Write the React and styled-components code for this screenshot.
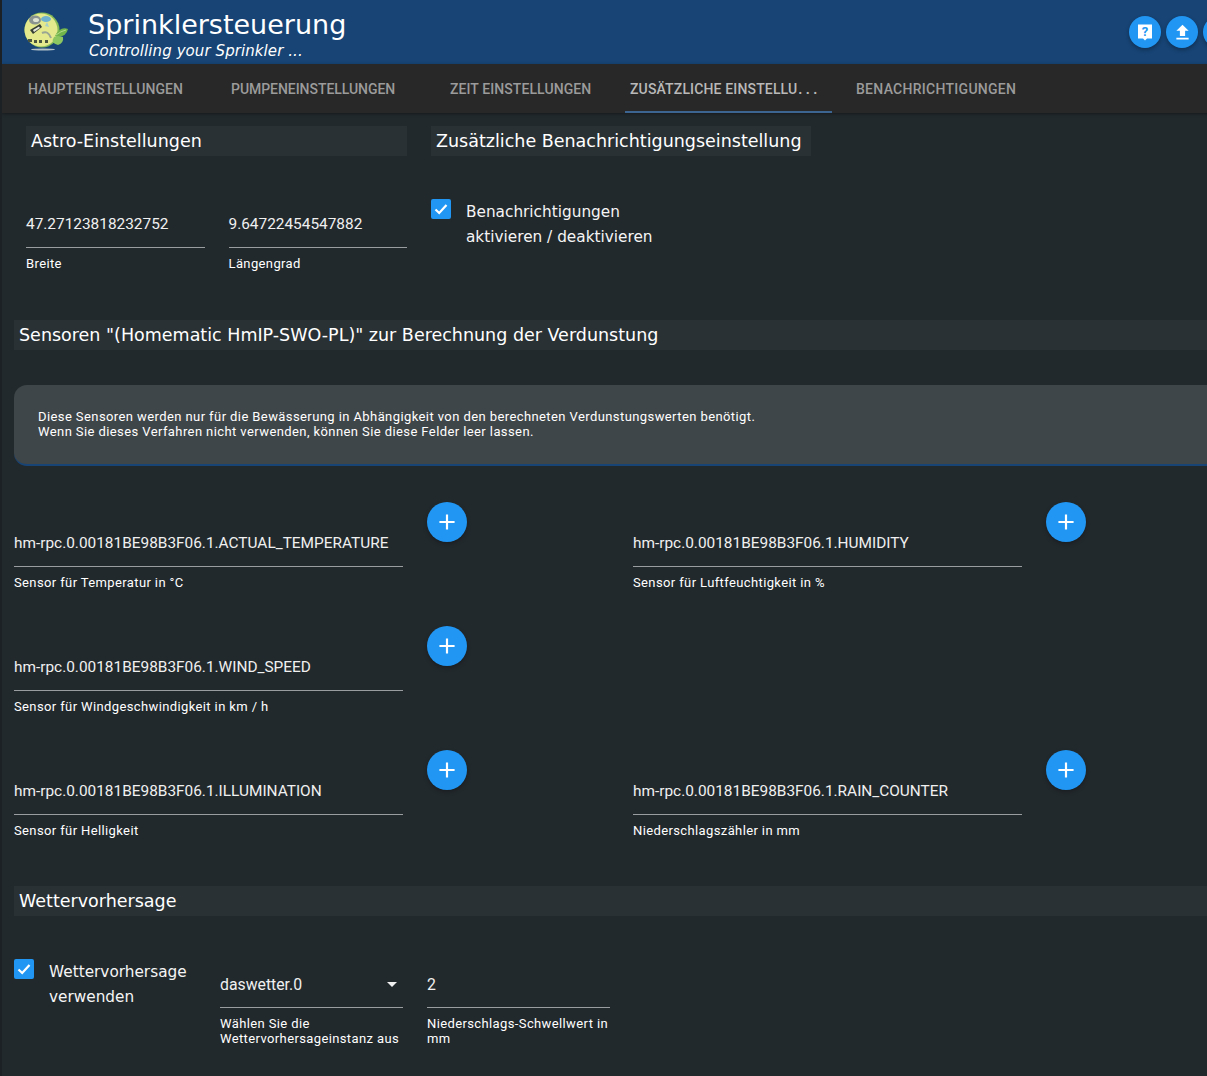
import React from 'react';
import styled, { createGlobalStyle } from 'styled-components';
import { MdFileUpload, MdAdd } from 'react-icons/md';

const GlobalStyle = createGlobalStyle`
  html, body {
    margin: 0;
    padding: 0;
    background: #22292d;
    overflow: hidden;
  }
  * { box-sizing: border-box; }
`;

const sensors = [
  [
    { value: 'hm-rpc.0.00181BE98B3F06.1.ACTUAL_TEMPERATURE', label: 'Sensor für Temperatur in °C' },
    { value: 'hm-rpc.0.00181BE98B3F06.1.HUMIDITY', label: 'Sensor für Luftfeuchtigkeit in %' },
  ],
  [
    { value: 'hm-rpc.0.00181BE98B3F06.1.WIND_SPEED', label: 'Sensor für Windgeschwindigkeit in km / h' },
  ],
  [
    { value: 'hm-rpc.0.00181BE98B3F06.1.ILLUMINATION', label: 'Sensor für Helligkeit' },
    { value: 'hm-rpc.0.00181BE98B3F06.1.RAIN_COUNTER', label: 'Niederschlagszähler in mm' },
  ],
];

const tabs = [
  { name: 'Haupteinstellungen', width: 203, pad: 26, spacing: 0.06 },
  { name: 'Pumpeneinstellungen', width: 212, pad: 26, spacing: -0.05 },
  { name: 'Zeit Einstellungen', width: 208, pad: 33, spacing: 0.08 },
  { name: 'Zusätzliche Einstellu', width: 207, pad: 5, spacing: 0.15, active: true },
  { name: 'Benachrichtigungen', width: 200, pad: 24, spacing: 0.28 },
];

function Logo() {
  return (
    <svg width="50" height="54" viewBox="0 0 50 54">
      <ellipse cx="21" cy="44.5" rx="12" ry="1" fill="#b4c2c8" />
      <circle cx="20" cy="25" r="17.5" fill="#86b957" />
      <circle cx="19" cy="25" r="16.5" fill="#e3e98c" />
      <ellipse cx="13" cy="15" rx="6" ry="4.5" fill="#8b9390" />
      <ellipse cx="14" cy="15" rx="3" ry="2" fill="#dfe3d2" />
      <ellipse cx="24" cy="14" rx="5" ry="3" fill="#6fb2cf" />
      <path d="M25 17 L27 22 L23 21 Z" fill="#a8cfc8" />
      <path d="M8 25 L18 19 L20 22 L11 29 Z" fill="#343c34" />
      <path d="M11 25 L17 21.5 L18 23 L12 27 Z" fill="#e5e8d8" />
      <path d="M20 28 Q26 25 29 33" stroke="#9aa593" strokeWidth="2" fill="none" />
      <path d="M6 34 h4 v3 h-4 z M12 35 h3 v3 h-3 z M17 35 h3 v3 h-3 z M23 35 h3 v3 h-3 z" fill="#4a5540" />
      <path d="M33 31 Q38 21 46 24 Q44 33 33 31 Z" fill="#72b54a" />
      <path d="M32 32 Q28 38 36 40 Q42 38 41 32 Q36 30 32 32 Z" fill="#8cc762" />
      <path d="M34 30 Q39 26 44 25" stroke="#c3e39c" strokeWidth="0.8" fill="none" />
    </svg>
  );
}

function Field({ value, label, wide }) {
  return (
    <FieldBox $wide={wide}>
      <FieldValue>{value}</FieldValue>
      <FieldLine />
      <FieldLabel>{label}</FieldLabel>
    </FieldBox>
  );
}

function Tick() {
  return (
    <svg width="16" height="16" viewBox="0 0 16 16">
      <path d="M2.5 8.5 L6.2 12 L13.5 4" fill="none" stroke="#fff" strokeWidth="2.2" />
    </svg>
  );
}

export default function App() {
  return (
    <Page>
      <GlobalStyle />
      <Header>
        <Logo />
        <Titles>
          <Title>Sprinklersteuerung</Title>
          <Subtitle>Controlling your Sprinkler ...</Subtitle>
        </Titles>
        <HeaderButtons>
          <RoundButton>
            <svg width="18" height="18" viewBox="0 0 18 18">
              <path d="M2 1.5h14v14h-5l-2 2-2-2H2z" fill="#fff" />
              <text x="9" y="13" fontFamily="Roboto, sans-serif" fontSize="13" fontWeight="700" textAnchor="middle" fill="#2196f3">?</text>
            </svg>
          </RoundButton>
          <RoundButton><MdFileUpload size={21} /></RoundButton>
          <RoundButton><MdFileUpload size={21} /></RoundButton>
        </HeaderButtons>
      </Header>

      <TabBar>
        {tabs.map((t) => (
          <Tab key={t.name} $width={t.width} $pad={t.pad} $spacing={t.spacing} $active={t.active}>
            {t.name}
            {t.active && <TabDots>...</TabDots>}
          </Tab>
        ))}
      </TabBar>

      <Content>
        <TopRow>
          <AstroColumn>
            <SectionTitle>Astro-Einstellungen</SectionTitle>
            <AstroFields>
              <Field value="47.27123818232752" label="Breite" />
              <Field value="9.64722454547882" label="Längengrad" />
            </AstroFields>
          </AstroColumn>
          <NoticeColumn>
            <SectionTitle>Zusätzliche Benachrichtigungseinstellung</SectionTitle>
            <CheckRow>
              <CheckBox><Tick /></CheckBox>
              <CheckText>Benachrichtigungen<br />aktivieren / deaktivieren</CheckText>
            </CheckRow>
          </NoticeColumn>
        </TopRow>

        <SectionTitle>Sensoren "(Homematic HmIP-SWO-PL)" zur Berechnung der Verdunstung</SectionTitle>

        <InfoBox>
          Diese Sensoren werden nur für die Bewässerung in Abhängigkeit von den berechneten Verdunstungswerten benötigt.<br />
          Wenn Sie dieses Verfahren nicht verwenden, können Sie diese Felder leer lassen.
        </InfoBox>

        <SensorGrid>
          {sensors.map((row) => (
            <SensorRow key={row[0].value}>
              {row.map((s) => (
                <SensorCell key={s.value}>
                  <Field value={s.value} label={s.label} wide />
                  <AddButton><MdAdd size={26} /></AddButton>
                </SensorCell>
              ))}
            </SensorRow>
          ))}
        </SensorGrid>

        <WeatherTitle>Wettervorhersage</WeatherTitle>

        <WeatherRow>
          <WeatherCheck>
            <CheckBox><Tick /></CheckBox>
            <CheckText>Wettervorhersage<br />verwenden</CheckText>
          </WeatherCheck>
          <SmallField>
            <SelectValue>
              daswetter.0
              <Caret />
            </SelectValue>
            <FieldLine />
            <FieldLabel>Wählen Sie die<br />Wettervorhersageinstanz aus</FieldLabel>
          </SmallField>
          <SmallField>
            <SelectValue>2</SelectValue>
            <FieldLine />
            <FieldLabel>Niederschlags-Schwellwert in<br />mm</FieldLabel>
          </SmallField>
        </WeatherRow>
      </Content>
    </Page>
  );
}

const Page = styled.div`
  width: 1300px;
  height: 1076px;
  border-left: 2px solid #1b2125;
  background: #22292d;
  overflow: hidden;
  font-family: Roboto, sans-serif;
  color: #fff;
`;

const Header = styled.header`
  height: 64px;
  background: #174475;
  display: flex;
  align-items: center;
  padding-left: 20px;
`;

const Titles = styled.div`
  margin-left: 16px;
  margin-top: 4px;
`;

const Title = styled.div`
  font-family: "DejaVu Sans", sans-serif;
  font-size: 27px;
  line-height: 34px;
  color: #fff;
`;

const Subtitle = styled.div`
  font-family: "DejaVu Sans", sans-serif;
  font-style: italic;
  font-size: 15px;
  line-height: 18px;
  letter-spacing: 0.08px;
  margin-left: 1px;
  color: #fff;
`;

const HeaderButtons = styled.div`
  position: absolute;
  left: 1129px;
  top: 16px;
  display: flex;
  gap: 5px;
`;

const RoundButton = styled.button`
  width: 32px;
  height: 32px;
  border-radius: 50%;
  border: 0;
  padding: 0;
  background: #2196f3;
  color: #fff;
  display: flex;
  align-items: center;
  justify-content: center;
  box-shadow: 0 2px 4px rgba(0, 0, 0, 0.3);
`;

const TabBar = styled.nav`
  height: 49px;
  background: #282828;
  display: flex;
  box-shadow: 0 1px 3px rgba(0, 0, 0, 0.4);
`;

const Tab = styled.div`
  width: ${(p) => p.$width}px;
  padding-left: ${(p) => p.$pad}px;
  padding-top: 2px;
  display: flex;
  align-items: center;
  font-size: 14px;
  font-weight: 500;
  letter-spacing: ${(p) => p.$spacing}px;
  text-transform: uppercase;
  white-space: nowrap;
  color: ${(p) => (p.$active ? '#b9b9b9' : '#9b9b9b')};
  border-bottom: 2px solid ${(p) => (p.$active ? '#3c6592' : 'transparent')};
`;

const TabDots = styled.span`
  margin-left: 1px;
  font-weight: 700;
  letter-spacing: 3.4px;
`;

const Content = styled.main`
  padding: 13px 0 0 12px;
`;

const TopRow = styled.div`
  display: flex;
  height: 194px;
  padding-left: 12px;
  gap: 24px;
`;

const AstroColumn = styled.div`
  width: 381px;
`;

const NoticeColumn = styled.div`
  width: 380px;
`;

const SectionTitle = styled.h2`
  margin: 0;
  height: 30px;
  padding-left: 5px;
  background: #2a3135;
  font-family: "DejaVu Sans", sans-serif;
  font-size: 17.5px;
  font-weight: 400;
  line-height: 30px;
  white-space: nowrap;
  color: #fff;
`;

const WeatherTitle = styled(SectionTitle)`
  margin-top: 12px;
`;

const AstroFields = styled.div`
  display: flex;
  gap: 24px;
  margin-top: 57px;
`;

const FieldBox = styled.div`
  width: ${(p) => (p.$wide ? '389px' : '178.5px')};
`;

const FieldValue = styled.div`
  font-size: 15.4px;
  line-height: 23px;
  margin-bottom: -3px;
  white-space: nowrap;
  color: #f0f0f0;
`;

const FieldLine = styled.div`
  height: 1px;
  margin-top: 14px;
  background: #9a9d9f;
`;

const FieldLabel = styled.div`
  margin-top: 8px;
  font-size: 13px;
  letter-spacing: 0.38px;
  line-height: 15px;
  white-space: nowrap;
  color: #fff;
`;

const CheckRow = styled.div`
  display: flex;
  margin-top: 43px;
`;

const CheckBox = styled.div`
  width: 20px;
  height: 20px;
  flex: none;
  border-radius: 2px;
  background: #2196f3;
  display: flex;
  align-items: center;
  justify-content: center;
`;

const CheckText = styled.div`
  margin-left: 15px;
  margin-top: 1px;
  font-family: "DejaVu Sans", sans-serif;
  font-size: 15.3px;
  line-height: 25px;
  white-space: nowrap;
  color: #f5f5f5;
`;

const InfoBox = styled.div`
  margin-top: 35px;
  height: 81px;
  padding: 24px 24px;
  background: #3f4649;
  border-radius: 13px 0 0 13px;
  border-bottom: 2px solid #174475;
  font-size: 13px;
  letter-spacing: 0.41px;
  line-height: 15px;
  color: #fff;
`;

const SensorGrid = styled.div`
  margin-top: 36px;
`;

const SensorRow = styled.div`
  height: 124px;
  display: grid;
  grid-template-columns: 619px 1fr;
`;

const SensorCell = styled.div`
  display: flex;
  align-items: flex-start;
  gap: 24px;
  padding-top: 30px;
`;

const AddButton = styled.button`
  width: 40px;
  height: 40px;
  flex: none;
  margin-top: -30px;
  border: 0;
  padding: 0;
  border-radius: 50%;
  background: #2196f3;
  color: #fff;
  display: flex;
  align-items: center;
  justify-content: center;
  box-shadow: 0 2px 4px rgba(0, 0, 0, 0.3);
`;

const WeatherRow = styled.div`
  display: flex;
  align-items: flex-start;
  margin-top: 43px;
`;

const WeatherCheck = styled.div`
  display: flex;
  width: 206px;
`;

const SmallField = styled.div`
  width: 183px;
  margin-right: 24px;
  margin-top: 15px;
`;

const SelectValue = styled.div`
  position: relative;
  font-size: 15.8px;
  line-height: 22px;
  margin-bottom: -3px;
  color: #f0f0f0;
`;

const Caret = styled.span`
  position: absolute;
  right: 6px;
  top: 8px;
  border-left: 5px solid transparent;
  border-right: 5px solid transparent;
  border-top: 5px solid #f0f0f0;
`;
